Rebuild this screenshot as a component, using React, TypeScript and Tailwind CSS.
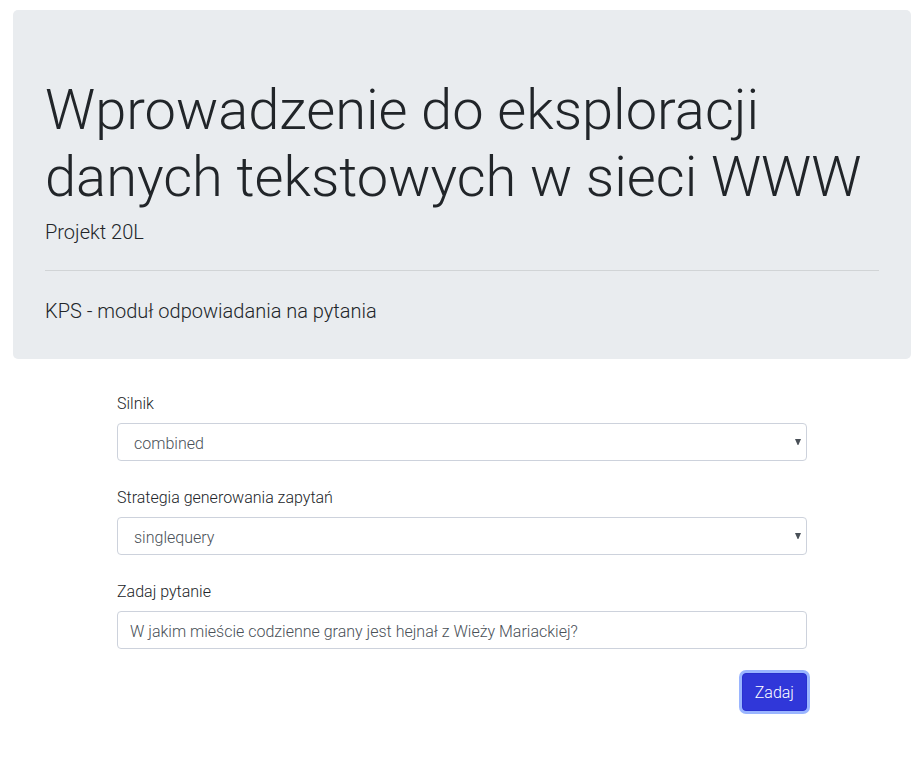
import React from 'react';

type SelectFieldProps = { id: string; label: string; options: string[] };

const control =
  'block h-[38px] w-full rounded border border-[#cdd2dc] bg-white text-base font-light leading-6 text-[#495057] outline-none';

function SelectField({ id, label, options }: SelectFieldProps) {
  return (
    <div className="mb-[25px]">
      <label htmlFor={id} className="mb-[7px] block leading-6">
        {label}
      </label>
      <div className="relative">
        <select id={id} className={`${control} appearance-none pl-4 pr-6 pt-1`}>
          {options.map((option) => (
            <option key={option}>{option}</option>
          ))}
        </select>
        <svg
          className="pointer-events-none absolute right-[5px] top-[15px] h-[7px] w-[7px]"
          viewBox="0 0 7 7"
          fill="#495057"
          aria-hidden="true"
        >
          <path d="M0 1h6L3.4 7H2.6z" />
        </svg>
      </div>
    </div>
  );
}

export default function App() {
  return (
    <div className="pb-10 pl-[13px] pr-[11px] pt-[10px] font-['Roboto',sans-serif] text-base font-light leading-6 text-[#212529]">
      <header className="mb-[33px] rounded-[5px] bg-[#e9ecef] px-8 pb-[33px] pt-[67px]">
        <h1 className="mb-[6px] text-[56px] font-light leading-[67px]">
          Wprowadzenie do eksploracji danych tekstowych w sieci WWW
        </h1>
        <p className="text-xl font-light leading-[30px]">Projekt 20L</p>
        <hr className="mb-[25px] mt-[23px] border-black/10" />
        <p className="text-xl font-light leading-[30px]">KPS - moduł odpowiadania na pytania</p>
      </header>
      <form className="mx-auto w-10/12 max-w-[690px]" onSubmit={(e) => e.preventDefault()}>
        <SelectField id="engine" label="Silnik" options={['combined']} />
        <SelectField id="strategy" label="Strategia generowania zapytań" options={['singlequery']} />
        <div className="mb-6">
          <label htmlFor="question" className="mb-[7px] block leading-6">
            Zadaj pytanie
          </label>
          <input
            id="question"
            type="text"
            className={`${control} px-3 pt-[2px]`}
            defaultValue="W jakim mieście codzienne grany jest hejnał z Wieży Mariackiej?"
          />
        </div>
        <div className="flex justify-end">
          <button
            type="submit"
            className="h-[38px] rounded border border-[#2930cf] bg-[#3037d9] px-3 pt-[2px] text-white shadow-[0_0_0_3px_#9ab5ff]"
          >
            Zadaj
          </button>
        </div>
      </form>
    </div>
  );
}
